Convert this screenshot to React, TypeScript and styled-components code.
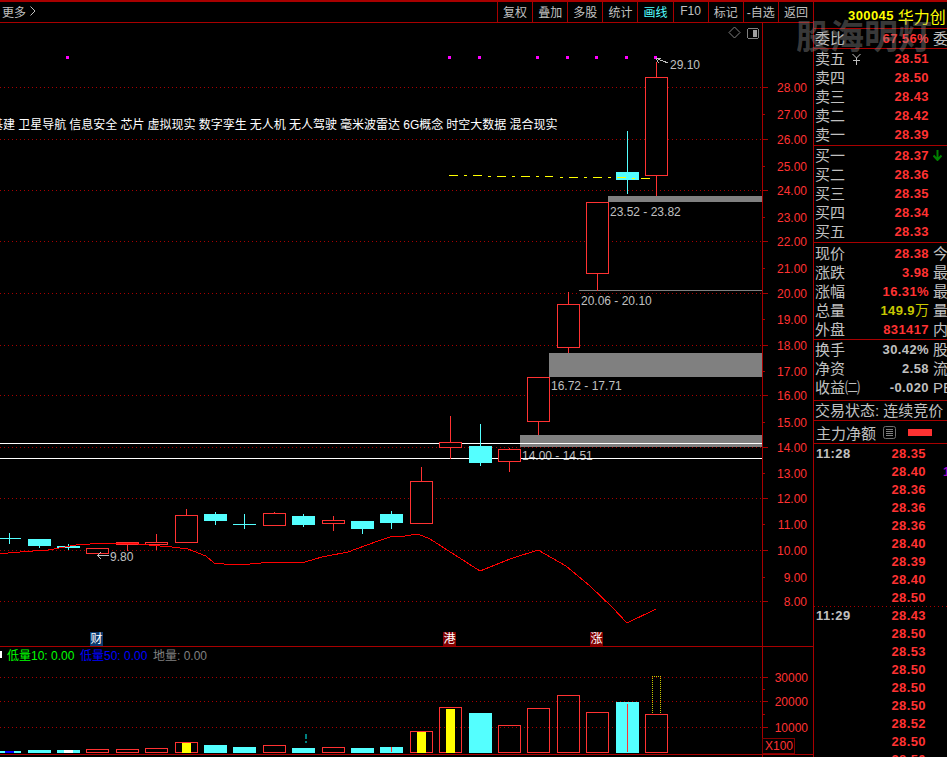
import type { ReactNode } from 'react';
import styled, { createGlobalStyle } from 'styled-components';

const LINE = '#a80000';
const RED = '#ff3232';
const CYAN = '#54ffff';
const GREY = '#c0c0c0';

const GlobalStyle = createGlobalStyle`
  html, body {
    margin: 0;
    padding: 0;
    background: #000;
    overflow: hidden;
  }
  * {
    box-sizing: border-box;
  }
`;

const Page = styled.div`
  position: relative;
  width: 947px;
  height: 757px;
  overflow: hidden;
  background: #000;
  border-top: 2px solid ${LINE};
  font-family: 'Liberation Sans', 'Noto Sans CJK SC', sans-serif;
  color: ${GREY};
  display: grid;
  grid-template-columns: 813px 134px;
`;

const Watermark = styled.div`
  position: absolute;
  left: 796px;
  top: 15px;
  font-size: 34px;
  line-height: 40px;
  font-weight: 700;
  color: rgba(140, 140, 140, 0.42);
  white-space: nowrap;
  pointer-events: none;
`;

const ChartColumn = styled.div`
  display: flex;
  flex-direction: column;
  min-width: 0;
`;

const Toolbar = styled.div`
  flex: none;
  height: 21px;
  display: flex;
  align-items: stretch;
  border-bottom: 1px solid ${LINE};
  font-size: 12px;
`;

const More = styled.div`
  margin-right: auto;
  padding: 0 0 2px 2px;
  display: flex;
  align-items: center;
  gap: 4px;
`;

const ToolButton = styled.div<{ $active?: boolean }>`
  flex: 0 0 35.11px;
  display: flex;
  align-items: center;
  justify-content: center;
  padding-bottom: 2px;
  border-left: 1px solid ${LINE};
  color: ${(p) => (p.$active ? CYAN : GREY)};
  white-space: nowrap;
`;

const Pane = styled.div<{ $height: number }>`
  flex: none;
  height: ${(p) => p.$height}px;
  display: grid;
  grid-template-columns: 762px 51px;
  border-bottom: 1px solid ${LINE};
`;

const Plot = styled.svg`
  display: block;
`;

const Axis = styled.div`
  position: relative;
  border-left: 1px solid ${LINE};
`;

const AxisDrawing = styled.svg`
  display: block;
  margin-left: -1px;
`;

const Multiplier = styled.div`
  position: absolute;
  left: -1px;
  bottom: 0;
  width: 33px;
  height: 16px;
  border: 1px solid #800000;
  color: ${RED};
  font-size: 12px;
  line-height: 14px;
  padding-left: 2px;
`;

const AxisTail = styled.div`
  flex: none;
  height: 3px;
  margin-left: 762px;
  border-left: 1px solid ${LINE};
`;

const ChartText = styled.text<{ $color?: string }>`
  font-size: 12px;
  fill: ${(p) => p.$color ?? GREY};
`;

const ConceptText = styled(ChartText)`
  word-spacing: -0.2px;
`;

const AxisText = styled.text`
  font-size: 12px;
  fill: ${RED};
  text-anchor: end;
`;

const Panel = styled.div`
  border-left: 1px solid ${LINE};
  overflow: hidden;
  display: flex;
  flex-direction: column;
`;

const Header = styled.div`
  flex: none;
  height: 27px;
  padding: 1px 0 0 34px;
  display: flex;
  align-items: center;
  gap: 4px;
  color: #ffff00;
  white-space: nowrap;
  border-bottom: 1px solid ${LINE};
`;

const Code = styled.span`
  font-size: 13px;
  font-weight: 700;
  letter-spacing: 0.4px;
`;

const StockName = styled.span`
  font-size: 16px;
`;

const Section = styled.div<{ $top?: number; $bottom?: number }>`
  flex: none;
  border-bottom: 1px solid ${LINE};
  padding-top: ${(p) => p.$top ?? 0}px;
  padding-bottom: ${(p) => p.$bottom ?? 0}px;
`;

const Row = styled.div`
  height: 19px;
  padding-left: 1px;
  display: grid;
  grid-template-columns: 54px 56px auto;
  column-gap: 4px;
  align-items: center;
  font-size: 15px;
  line-height: 19px;
  white-space: nowrap;
`;

const Label = styled.span`
  display: flex;
  align-items: center;
  gap: 7px;
`;

const Value = styled.span<{ $tone?: 'red' | 'grey' | 'yellow' }>`
  text-align: right;
  font-size: 13px;
  font-weight: 700;
  letter-spacing: 0.4px;
  color: ${(p) => (p.$tone === 'grey' ? GREY : p.$tone === 'yellow' ? '#c8c800' : RED)};
`;

const Unit = styled.span`
  font-size: 14px;
  font-weight: 400;
  letter-spacing: 0;
`;

const Suffix = styled.span`
  display: flex;
  align-items: center;
`;

const StatusRow = styled.div`
  height: 19px;
  padding-left: 1px;
  font-size: 15px;
  line-height: 19px;
  white-space: nowrap;
`;

const MoneyRow = styled.div`
  height: 22px;
  padding-left: 2px;
  display: flex;
  align-items: center;
  font-size: 15px;
  white-space: nowrap;
`;

const ListIcon = styled.svg`
  margin-left: 7px;
`;

const MoneyBar = styled.span`
  width: 24px;
  height: 7px;
  margin-left: 12px;
  background: ${RED};
`;

const TradeGroup = styled.div`
  flex: none;
  height: 163px;
  background: repeating-linear-gradient(90deg, ${LINE} 0 1px, transparent 1px 4px) left bottom / 100% 1px no-repeat;
`;

const TradeGroupNext = styled.div`
  flex: none;
  margin-top: -1px;
`;

const TradeRow = styled.div`
  height: 18px;
  padding-left: 2px;
  display: grid;
  grid-template-columns: 50px 60px auto;
  align-items: center;
  font-size: 13px;
  font-weight: 700;
  letter-spacing: 0.4px;
  white-space: nowrap;
`;

const TradePrice = styled.span`
  text-align: right;
  color: ${RED};
`;

const TradeFlag = styled.span`
  padding-left: 17px;
  color: #a000c0;
`;

const TOOLS = ['复权', '叠加', '多股', '统计', '画线', 'F10', '标记', '-自选', '返回'];

const LEFTS = [-2, 28, 57, 86, 116, 145, 175, 204, 233, 263, 292, 322, 351, 380, 410, 439, 469, 498, 527, 557, 586, 616, 645];

// top, bottom, high, low, falling
const CANDLES: [number, number, number, number, boolean][] = [
  [538, 538, 533, 543, true],
  [539, 546, 539, 547, true],
  [546, 548, 544, 549, true],
  [548, 553, 548, 553, false],
  [542, 544, 542, 550, false],
  [542, 544, 534, 549, false],
  [515, 542, 509, 542, false],
  [514, 521, 512, 524, true],
  [524, 524, 514, 528, true],
  [513, 525, 512, 525, false],
  [516, 525, 514, 526, true],
  [520, 523, 516, 530, false],
  [521, 529, 521, 533, true],
  [514, 523, 511, 528, true],
  [481, 523, 467, 523, false],
  [442, 447, 416, 458, false],
  [446, 463, 424, 465, true],
  [449, 461, 448, 471, false],
  [377, 421, 377, 434, false],
  [304, 347, 292, 352, false],
  [202, 273, 202, 290, false],
  [172, 180, 131, 193, true],
  [77, 175, 62, 195, false],
];

// top of bar, filled, inner colour, inner top
const VOLUMES: [number, boolean, string?, number?][] = [
  [751, true, '#0000ff', 751],
  [750, true],
  [750, true, '#ffffff', 750],
  [749, false],
  [749, false],
  [748, false],
  [742, false, '#ffff00', 743],
  [745, true],
  [747, true],
  [745, false],
  [748, true],
  [747, false],
  [748, true],
  [747, true],
  [731, false, '#ffff00', 732],
  [707, false, '#ffff00', 709],
  [713, true],
  [725, false],
  [708, false],
  [695, false],
  [712, false],
  [702, true],
  [714, false],
];

const GRID = [87, 139, 190, 241, 293, 345, 395, 447, 498, 550, 601];
const DOTS = [67, 449, 479, 537, 567, 596, 626, 655];

const PRICE_AXIS: [string, number, boolean][] = [
  ['28.00', 87, true],
  ['27.00', 114, false],
  ['26.00', 139, true],
  ['25.00', 166, false],
  ['24.00', 190, true],
  ['23.00', 217, false],
  ['22.00', 241, true],
  ['21.00', 268, false],
  ['20.00', 293, true],
  ['19.00', 319, false],
  ['18.00', 345, true],
  ['17.00', 371, false],
  ['16.00', 395, true],
  ['15.00', 422, false],
  ['14.00', 447, true],
  ['13.00', 473, false],
  ['12.00', 498, true],
  ['11.00', 524, false],
  ['10.00', 550, true],
  ['9.00', 577, false],
  ['8.00', 601, true],
];

const VOLUME_AXIS: [string, number][] = [
  ['30000', 677],
  ['20000', 701],
  ['10000', 727],
];

const ZONES: [number, number, number, string, number][] = [
  [608, 196, 6, '23.52 - 23.82', 216],
  [579, 290, 1, '20.06 - 20.10', 305],
  [549, 353, 24, '16.72 - 17.71', 390],
  [520, 435, 12, '14.00 - 14.51', 460],
];

const DASHES: [number, number, number][] = [
  [449, 458, 175], [464, 467, 175], [473, 482, 175], [488, 491, 176], [497, 506, 176],
  [512, 515, 176], [521, 530, 176], [536, 539, 176], [545, 553, 176], [560, 563, 177],
  [569, 578, 177], [584, 587, 177], [593, 602, 177], [608, 611, 177], [617, 626, 177],
  [632, 635, 178], [641, 650, 178],
];

const MA_LINE =
  '0,554 8,553 20,552 33,551 48,550 54,549 65,547 76,545 90,544 112,543 118,543 138,544 160,546 172,547 188,549 193,551 206,556 214,563 224,564 238,565 250,564 272,562 305,562 322,557 348,552 367,545 378,541 390,537 405,536 418,534 430,539 480,571 510,559 538,550 566,566 590,586 612,607 627,623 656,609';

const CONCEPTS = '基建 卫星导航 信息安全 芯片 虚拟现实 数字孪生 无人机 无人驾驶 毫米波雷达 6G概念 时空大数据 混合现实';

const BADGES: [string, number, string][] = [
  ['财', 90, '#0a3a6e'],
  ['港', 443, '#800000'],
  ['涨', 590, '#800000'],
];

const SELLS = [
  ['卖五', '28.51'],
  ['卖四', '28.50'],
  ['卖三', '28.43'],
  ['卖二', '28.42'],
  ['卖一', '28.39'],
];

const BUYS = [
  ['买一', '28.37'],
  ['买二', '28.36'],
  ['买三', '28.35'],
  ['买四', '28.34'],
  ['买五', '28.33'],
];

const FIRST_TRADES = ['28.35', '28.40', '28.36', '28.36', '28.36', '28.40', '28.39', '28.40', '28.50'];
const NEXT_TRADES = ['28.43', '28.50', '28.53', '28.50', '28.50', '28.50', '28.52', '28.50', '28.50'];

function PriceChart() {
  return (
    <Plot width={762} height={623} viewBox="0 23 762 623" shapeRendering="crispEdges">
      {GRID.map((y) => (
        <line key={y} x1={0} x2={762} y1={y + 0.5} y2={y + 0.5} stroke={LINE} strokeDasharray="1 3" />
      ))}

      {DOTS.map((x) => (
        <rect key={x} x={x - 1} y={56} width={3} height={3} fill="#ff00ff" />
      ))}

      <path d="M734.5 27 L740 32.5 L734.5 38 L729 32.5 Z" fill="none" stroke="#808080" shapeRendering="auto" />
      <rect x={747.5} y={28.5} width={11} height={10} rx={2} fill="none" stroke="#808080" />
      <rect x={753} y={30} width={4} height={7} fill="#a0a0a0" />

      <ConceptText x={-9} y={129} $color="#ffffff">
        {CONCEPTS}
      </ConceptText>

      {ZONES.map(([x, y, h, label, base]) => (
        <g key={label}>
          <rect x={x} y={y} width={762 - x} height={h} fill="#808080" />
          <ChartText x={x + 2} y={base}>
            {label}
          </ChartText>
        </g>
      ))}

      <rect x={0} y={443} width={762} height={1} fill="#ffffff" />
      <rect x={0} y={458} width={762} height={1} fill="#ffffff" />

      {CANDLES.map(([top, bottom, high, low, falling], i) => {
        const left = LEFTS[i];
        const color = falling ? CYAN : RED;
        return (
          <g key={left}>
            <rect x={left + 11} y={high} width={1} height={low - high + 1} fill={color} />
            {falling ? (
              <rect x={left} y={top} width={23} height={Math.max(bottom - top, 1)} fill={CYAN} />
            ) : (
              <rect x={left + 0.5} y={top + 0.5} width={22} height={bottom - top} fill="#000" stroke={RED} />
            )}
          </g>
        );
      })}

      <polyline points={MA_LINE} fill="none" stroke="#ff0000" />

      {DASHES.map(([from, to, y]) => (
        <rect key={from} x={from} y={y} width={to - from} height={1} fill="#ffff00" />
      ))}

      <path d="M668 63 L656.5 58.5 M656.5 58.5 H661 M656.5 58.5 L658.5 63" fill="none" stroke={GREY} />
      <ChartText x={670} y={69}>
        29.10
      </ChartText>
      <path d="M109 555.5 H97.5 M97.5 555.5 L101 552 M97.5 555.5 L101 559" fill="none" stroke={GREY} />
      <ChartText x={110} y={561}>
        9.80
      </ChartText>

      {BADGES.map(([text, x, bg]) => (
        <g key={text}>
          <rect x={x} y={632} width={13} height={14} fill={bg} />
          <ChartText x={x + 0.5} y={643} $color="#ffffff">
            {text}
          </ChartText>
        </g>
      ))}
    </Plot>
  );
}

function PriceAxis() {
  return (
    <AxisDrawing width={51} height={623} viewBox="762 23 51 623" shapeRendering="crispEdges">
      {PRICE_AXIS.map(([text, y, major]) => (
        <g key={text}>
          <line x1={763} x2={major ? 768 : 765} y1={y + 0.5} y2={y + 0.5} stroke={LINE} />
          <AxisText x={807} y={y + 5}>
            {text}
          </AxisText>
        </g>
      ))}
    </AxisDrawing>
  );
}

function VolumeChart() {
  return (
    <Plot width={762} height={107} viewBox="0 647 762 107" shapeRendering="crispEdges">
      {VOLUME_AXIS.map(([, y]) => (
        <line key={y} x1={0} x2={762} y1={y + 0.5} y2={y + 0.5} stroke={LINE} strokeDasharray="1 3" />
      ))}

      <rect x={0} y={651} width={2} height={7} fill="#ffffff" />
      <ChartText x={7} y={660} $color="#00ff00">
        低量10: 0.00
      </ChartText>
      <ChartText x={80} y={660} $color="#0000ff">
        低量50: 0.00
      </ChartText>
      <ChartText x={153} y={660} $color="#808080">
        地量: 0.00
      </ChartText>

      {VOLUMES.map(([top, filled, inner, innerTop], i) => {
        const left = LEFTS[i];
        return (
          <g key={left}>
            {filled ? (
              <rect x={left} y={top} width={23} height={753 - top} fill={CYAN} />
            ) : (
              <rect x={left + 0.5} y={top + 0.5} width={22} height={752 - top} fill="none" stroke={RED} />
            )}
            {inner && <rect x={left + 7} y={innerTop} width={9} height={753 - (innerTop ?? 0)} fill={inner} />}
          </g>
        );
      })}

      <rect x={305} y={734} width={2} height={5} fill="#008080" />
      <rect x={305} y={741} width={2} height={2} fill="#008080" />
      <rect x={391} y={747} width={1} height={5} fill={RED} />
      <rect x={627} y={704} width={1} height={48} fill={RED} />
      <path d="M652.5 713 V676.5 H660.5 V713" fill="none" stroke="#c8c800" strokeDasharray="1 1" />
    </Plot>
  );
}

function VolumeAxis() {
  return (
    <AxisDrawing width={51} height={107} viewBox="762 647 51 107" shapeRendering="crispEdges">
      {VOLUME_AXIS.map(([text, y]) => (
        <g key={text}>
          <line x1={763} x2={768} y1={y + 0.5} y2={y + 0.5} stroke={LINE} />
          <AxisText x={808} y={y + 5}>
            {text}
          </AxisText>
        </g>
      ))}
      <line x1={763} x2={765} y1={689.5} y2={689.5} stroke={LINE} />
      <line x1={763} x2={765} y1={714.5} y2={714.5} stroke={LINE} />
    </AxisDrawing>
  );
}

function Quote({ label, value, suffix, tone }: { label: string; value: ReactNode; suffix?: string; tone?: 'red' | 'grey' | 'yellow' }) {
  return (
    <Row>
      <Label>{label}</Label>
      <Value $tone={tone}>{value}</Value>
      <Suffix>{suffix}</Suffix>
    </Row>
  );
}

export default function App() {
  return (
    <Page>
      <GlobalStyle />

      <ChartColumn>
        <Toolbar>
          <More>
            更多
            <svg width="6" height="10" viewBox="0 0 6 10">
              <path d="M0.5 0.5 L5 5 L0.5 9.5" fill="none" stroke={GREY} />
            </svg>
          </More>
          {TOOLS.map((tool) => (
            <ToolButton key={tool} $active={tool === '画线'}>
              {tool}
            </ToolButton>
          ))}
        </Toolbar>

        <Pane $height={624}>
          <PriceChart />
          <Axis>
            <PriceAxis />
          </Axis>
        </Pane>

        <Pane $height={108}>
          <VolumeChart />
          <Axis>
            <VolumeAxis />
            <Multiplier>X100</Multiplier>
          </Axis>
        </Pane>

        <AxisTail />
      </ChartColumn>

      <Panel>
        <Header>
          <Code>300045</Code>
          <StockName>华力创</StockName>
        </Header>

        <Section>
          <Quote label="委比" value="67.56%" suffix="委" />
        </Section>

        <Section $bottom={1}>
          {SELLS.map(([label, price], i) => (
            <Row key={label}>
              <Label>
                {label}
                {i === 0 && (
                  <svg width="9" height="12" viewBox="0 0 9 12">
                    <path d="M0.5 1 L4.5 5 L8.5 1 M4.5 5 V12 M1 7.5 H8" fill="none" stroke={GREY} />
                  </svg>
                )}
              </Label>
              <Value>{price}</Value>
            </Row>
          ))}
        </Section>

        <Section $bottom={1}>
          {BUYS.map(([label, price], i) => (
            <Row key={label}>
              <Label>{label}</Label>
              <Value>{price}</Value>
              {i === 0 && (
                <Suffix>
                  <svg width="9" height="11" viewBox="0 0 9 11">
                    <path d="M4.5 0 V10 M0.5 5.5 L4.5 10 L8.5 5.5" fill="none" stroke="#008000" strokeWidth="2" />
                  </svg>
                </Suffix>
              )}
            </Row>
          ))}
        </Section>

        <Section $top={1}>
          <Quote label="现价" value="28.38" suffix="今" />
          <Quote label="涨跌" value="3.98" suffix="最" />
          <Quote label="涨幅" value="16.31%" suffix="最" />
          <Quote
            label="总量"
            tone="yellow"
            value={
              <>
                149.9<Unit>万</Unit>
              </>
            }
            suffix="量"
          />
          <Quote label="外盘" value="831417" suffix="内" />
        </Section>

        <Section $bottom={3}>
          <Quote label="换手" value="30.42%" tone="grey" suffix="股" />
          <Quote label="净资" value="2.58" tone="grey" suffix="流" />
          <Quote label="收益㈡" value="-0.020" tone="grey" suffix="PE" />
        </Section>

        <Section>
          <StatusRow>交易状态: 连续竞价</StatusRow>
        </Section>

        <Section>
          <MoneyRow>
            主力净额
            <ListIcon width="13" height="13" viewBox="0 0 13 13">
              <rect x="0.5" y="0.5" width="12" height="12" rx="2" fill="none" stroke="#707070" />
              <path d="M3 3.5 H10 M3 5.5 H10 M3 7.5 H10 M3 9.5 H10" stroke="#808080" />
            </ListIcon>
            <MoneyBar />
          </MoneyRow>
        </Section>

        <TradeGroup>
          {FIRST_TRADES.map((price, i) => (
            <TradeRow key={i}>
              <span>{i === 0 ? '11:28' : ''}</span>
              <TradePrice>{price}</TradePrice>
              {i === 1 && <TradeFlag>1</TradeFlag>}
            </TradeRow>
          ))}
        </TradeGroup>

        <TradeGroupNext>
          {NEXT_TRADES.map((price, i) => (
            <TradeRow key={i}>
              <span>{i === 0 ? '11:29' : ''}</span>
              <TradePrice>{price}</TradePrice>
            </TradeRow>
          ))}
        </TradeGroupNext>
      </Panel>

      <Watermark>股海明灯</Watermark>
    </Page>
  );
}
